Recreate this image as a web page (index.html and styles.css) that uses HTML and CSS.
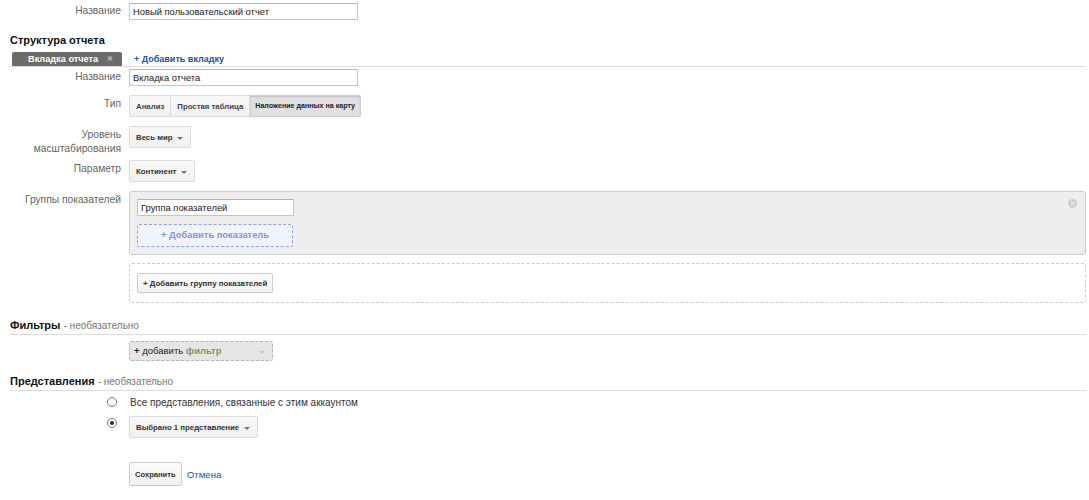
FILE: index.html
```html
<!doctype html>
<html lang="ru">
<head>
  <meta charset="utf-8">
  <title>Новый пользовательский отчет</title>
  <link rel="stylesheet" href="styles.css">
</head>
<body>
  <div class="page">
    <div class="row row-first">
      <div class="label">Название</div>
      <input class="text wide" type="text" value="Новый пользовательский отчет">
    </div>

    <div class="section-title">Структура отчета</div>
    <div class="tabs">
      <span class="tab">Вкладка отчета <span class="tab-close">&#x2716;</span></span>
      <a class="add-tab" href="#">+ Добавить вкладку</a>
    </div>

    <div class="row row-tabname">
      <div class="label">Название</div>
      <input class="text wide" type="text" value="Вкладка отчета">
    </div>

    <div class="row">
      <div class="label">Тип</div>
      <div class="seg">
        <button class="seg-btn">Анализ</button>
        <button class="seg-btn">Простая таблица</button>
        <button class="seg-btn active">Наложение данных на карту</button>
      </div>
    </div>

    <div class="row row-zoom">
      <div class="label">Уровень масштабирования</div>
      <button class="select">Весь мир <span class="caret"></span></button>
    </div>

    <div class="row">
      <div class="label">Параметр</div>
      <button class="select">Континент <span class="caret"></span></button>
    </div>

    <div class="row">
      <div class="label">Группы показателей</div>
      <div class="groups">
        <div class="group">
          <span class="group-remove"></span>
          <input class="text group-name" type="text" value="Группа показателей">
          <div class="add-metric">+ Добавить показатель</div>
        </div>
        <div class="add-group-box">
          <button class="btn">+ Добавить группу показателей</button>
        </div>
      </div>
    </div>

    <div class="section-title lined filters-title">Фильтры <span class="optional">- необязательно</span></div>
    <div class="row row-filter">
      <div class="label"></div>
      <div class="filter-add"><b>+</b> добавить <span class="filter-word">фильтр</span><span class="caret light"></span></div>
    </div>

    <div class="section-title lined views-title">Представления <span class="optional">- необязательно</span></div>
    <div class="radio-row radio-first">
      <span class="radio"></span>
      <span class="radio-text">Все представления, связанные с этим аккаунтом</span>
    </div>
    <div class="radio-row radio-second">
      <span class="radio checked"></span>
      <button class="select">Выбрано 1 представление <span class="caret"></span></button>
    </div>

    <div class="actions">
      <button class="btn btn-save">Сохранить</button>
      <a class="cancel" href="#">Отмена</a>
    </div>
  </div>
</body>
</html>
```

FILE: styles.css
```css
html, body {
	margin: 0;
	padding: 0;
	background: #fff;
	font-family: "Liberation Sans", Arial, sans-serif;
	font-size: 11px;
	color: #222;
}
button { font-family: inherit; cursor: pointer; }
button:focus, input:focus { outline: none; }
a { text-decoration: none; }

.page { padding: 0 3px 0 10px; }

.row { display: flex; align-items: flex-start; margin-top: 9px; }
.row-first { margin-top: 3px; }
.row-tabname { margin-top: 2px; }
.row-zoom + .row { margin-top: 4px; }

.label {
	width: 111px;
	margin-right: 8px;
	flex: none;
	text-align: right;
	color: #666;
	font-size: 10.25px;
	line-height: 14px;
	padding-top: 2px;
}
.row-first .label, .row-tabname .label { padding-top: 1px; }

input.text {
	box-sizing: border-box;
	height: 17px;
	border: 1px solid #c6c6c6;
	border-top-color: #b4b4b4;
	padding: 0 3px;
	font-family: inherit;
	font-size: 9.4px;
	color: #222;
	background: #fff;
}
input.wide { width: 229px; }

.section-title {
	font-size: 11px;
	font-weight: bold;
	line-height: 14px;
	color: #111;
	margin-top: 13px;
}
.section-title.lined {
	border-bottom: 1px solid #ddd;
	padding-bottom: 1px;
}
.optional { font-size: 10px; font-weight: normal; color: #777; }
.filters-title { margin-top: 15px; }
.views-title { margin-top: 13px; }

.tabs {
	display: flex;
	align-items: center;
	margin-top: 5px;
	border-bottom: 1px solid #ddd;
}
.tab {
	box-sizing: border-box;
	width: 110px;
	height: 14px;
	margin-left: 2px;
	padding-left: 16px;
	background: #6b6b6b;
	color: #fff;
	font-size: 9.2px;
	font-weight: bold;
	line-height: 14px;
	border-radius: 2px 2px 0 0;
}
.tab-close { color: #a9a9a9; font-size: 7px; margin-left: 6px; vertical-align: 1px; }
.add-tab {
	margin-left: 12px;
	color: #2054a8;
	font-size: 9px;
	font-weight: bold;
	line-height: 14px;
}

.seg { display: flex; }
.seg-btn {
	height: 22px;
	padding: 0 6px;
	border: 1px solid #dcdcdc;
	border-left-width: 0;
	background: linear-gradient(#f8f8f8, #f1f1f1);
	color: #444;
	font-size: 7.8px;
	font-weight: bold;
	border-radius: 0;
}
.seg-btn:first-child { border-left-width: 1px; border-radius: 2px 0 0 2px; }
.seg-btn:last-child { border-radius: 0 2px 2px 0; }
.seg-btn.active {
	padding: 0 5px;
	font-size: 7.1px;
	background: #e0e0e0;
	border-color: #ccc;
	box-shadow: inset 0 1px 2px rgba(0,0,0,0.15);
	color: #222;
}

.select {
	position: relative;
	height: 22px;
	padding: 0 18px 0 6px;
	border: 1px solid #dcdcdc;
	border-radius: 2px;
	background: linear-gradient(#f8f8f8, #f1f1f1);
	color: #333;
	font-size: 7.8px;
	font-weight: bold;
	text-align: left;
}
.caret {
	position: absolute;
	right: 7px;
	top: 10px;
	border: 3px solid transparent;
	border-top: 3px solid #777;
	border-bottom-width: 0;
}
.caret.light { border-top-color: #c8c8c8; top: 9px; }

.groups { flex: 1; }
.group {
	position: relative;
	box-sizing: border-box;
	height: 64px;
	padding: 7px;
	background: #eee;
	border: 1px solid #ccc;
	border-radius: 3px;
}
.group-name { width: 157px; display: block; }
.group-remove {
	position: absolute;
	right: 8px;
	top: 7px;
	width: 9px;
	height: 9px;
	border-radius: 50%;
	background: #cfcfcf;
}
.group-remove:before, .group-remove:after {
	content: '';
	position: absolute;
	left: 2px;
	top: 4px;
	width: 5px;
	height: 1px;
	background: #eee;
	transform: rotate(45deg);
}
.group-remove:after { transform: rotate(-45deg); }
.add-metric {
	box-sizing: border-box;
	width: 156px;
	height: 23px;
	margin-top: 8px;
	border: 1px dashed #8ea4e6;
	border-radius: 2px;
	background: #f1f4fc;
	color: #8398dc;
	font-size: 9.3px;
	font-weight: bold;
	line-height: 21px;
	text-align: center;
}
.add-group-box {
	box-sizing: border-box;
	height: 40px;
	margin-top: 8px;
	padding: 9px 7px;
	border: 1px dashed #ccc;
	border-radius: 3px;
}
.btn {
	height: 20px;
	padding: 0 5px;
	border: 1px solid #ccc;
	border-radius: 2px;
	background: linear-gradient(#fbfbfb, #f1f1f1);
	color: #333;
	font-size: 7.9px;
	font-weight: bold;
}

.row-filter { margin-top: 6px; }
.filter-add {
	position: relative;
	box-sizing: border-box;
	width: 144px;
	height: 20px;
	padding-left: 4px;
	border: 1px dashed #b5b5b5;
	border-radius: 2px;
	background: #e6e6e6;
	color: #222;
	font-size: 9.5px;
	line-height: 18px;
}
.filter-word { color: #8c9160; font-weight: bold; }

.radio-row { display: flex; align-items: center; padding-left: 97px; }
.radio-first { margin-top: 4px; height: 14px; }
.radio-second { margin-top: 7px; }
.radio {
	box-sizing: border-box;
	position: relative;
	width: 10px;
	height: 10px;
	margin-right: 12px;
	border: 1px solid #777;
	border-radius: 50%;
	flex: none;
}
.radio-second .radio { align-self: flex-start; margin-top: 2px; }
.radio.checked:after {
	content: '';
	position: absolute;
	left: 2px;
	top: 2px;
	width: 4px;
	height: 4px;
	border-radius: 50%;
	background: #333;
}
.radio-text { margin-left: 1px; color: #333; font-size: 10px; }

.actions { display: flex; align-items: center; margin-top: 24px; padding-left: 119px; }
.btn-save { height: 24px; padding: 0 5px; font-size: 7.6px; }
.cancel { margin-left: 5px; color: #2054a8; font-size: 9.7px; }
```
